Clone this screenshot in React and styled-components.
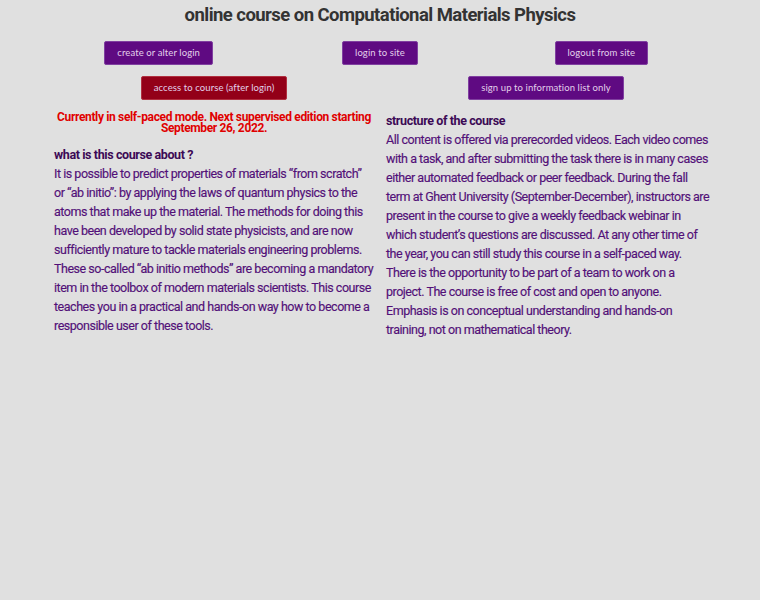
import styled, { createGlobalStyle } from 'styled-components'

const Global = createGlobalStyle`
    html, body {
        margin: 0;
        background: #e0e0e0;
    }

    body {
        font-family: Roboto, "Liberation Sans", sans-serif;
    }
`

const Page = styled.div`
    width: 664px;
    margin: 0 auto;
    padding-top: 4px;
`

const Title = styled.h1`
    margin: 0 0 15px;
    text-align: center;
    color: #333333;
    font-size: 18.5px;
    font-weight: 700;
    line-height: 22px;
    letter-spacing: -0.55px;
`

const ButtonRow = styled.div`
    display: grid;
    grid-template-columns: repeat(${ ( { $cols } ) => $cols }, 1fr);
    justify-items: center;
    margin-bottom: ${ ( { $gap } ) => $gap }px;
`

const Button = styled.a`
    display: inline-block;
    box-sizing: border-box;
    height: 24px;
    padding: 0 12px;
    border: 1px solid ${ ( { $red } ) => $red ? `#b03040` : `#8040a0` };
    border-radius: 2px;
    background: ${ ( { $red } ) => $red ? `#930018` : `#5f0a82` };
    color: #e2d0ea;
    font-family: Lato, "Open Sans", sans-serif;
    font-size: 9.5px;
    line-height: 22px;
    letter-spacing: 0.1px;
    text-decoration: none;
`

const Columns = styled.div`
    display: grid;
    grid-template-columns: 1fr 1fr;
    padding-top: 1px;
`

const Column = styled.div`
    padding: 0 ${ ( { $right } ) => $right ? `0` : `6px` } 0 6px;
`

const Notice = styled.p`
    margin: 1px 0 11px;
    text-align: center;
    color: #e00000;
    font-size: 12px;
    font-weight: 700;
    line-height: 11px;
    letter-spacing: -0.35px;
`

const Heading = styled.h3`
    margin: 0;
    color: #3c0a55;
    font-size: 12.5px;
    font-weight: 700;
    line-height: 19px;
    letter-spacing: -0.4px;
`

const Body = styled.p`
    margin: 0;
    color: #521078;
    font-size: 12.5px;
    line-height: 19px;
    letter-spacing: -0.47px;
    -webkit-text-stroke: 0.15px #521078;
`

export default function App() {

    return <>
        <Global />
        <Page>
            <Title>online course on Computational Materials Physics</Title>
            <ButtonRow $cols={ 3 } $gap={ 11 }>
                <Button>create or alter login</Button>
                <Button>login to site</Button>
                <Button>logout from site</Button>
            </ButtonRow>
            <ButtonRow $cols={ 2 } $gap={ 10 }>
                <Button $red>access to course (after login)</Button>
                <Button>sign up to information list only</Button>
            </ButtonRow>
            <Columns>
                <Column>
                    <Notice>Currently in self-paced mode. Next supervised edition starting September 26, 2022.</Notice>
                    <Heading>what is this course about ?</Heading>
                    <Body>
                        It is possible to predict properties of materials “from scratch” or “ab initio”: by applying the laws of quantum physics to the atoms that make up the material. The methods for doing this have been developed by solid state physicists, and are now sufficiently mature to tackle materials engineering problems. These so-called “ab initio methods” are becoming a mandatory item in the toolbox of modern materials scientists. This course teaches you in a practical and hands-on way how to become a responsible user of these tools.
                    </Body>
                </Column>
                <Column $right>
                    <Heading>structure of the course</Heading>
                    <Body>
                        All content is offered via prerecorded videos. Each video comes with a task, and after submitting the task there is in many cases either automated feedback or peer feedback. During the fall term at Ghent University (September-December), instructors are present in the course to give a weekly feedback webinar in which student’s questions are discussed. At any other time of the year, you can still study this course in a self-paced way. There is the opportunity to be part of a team to work on a project. The course is free of cost and open to anyone. Emphasis is on conceptual understanding and hands-on training, not on mathematical theory.
                    </Body>
                </Column>
            </Columns>
        </Page>
    </>
}
